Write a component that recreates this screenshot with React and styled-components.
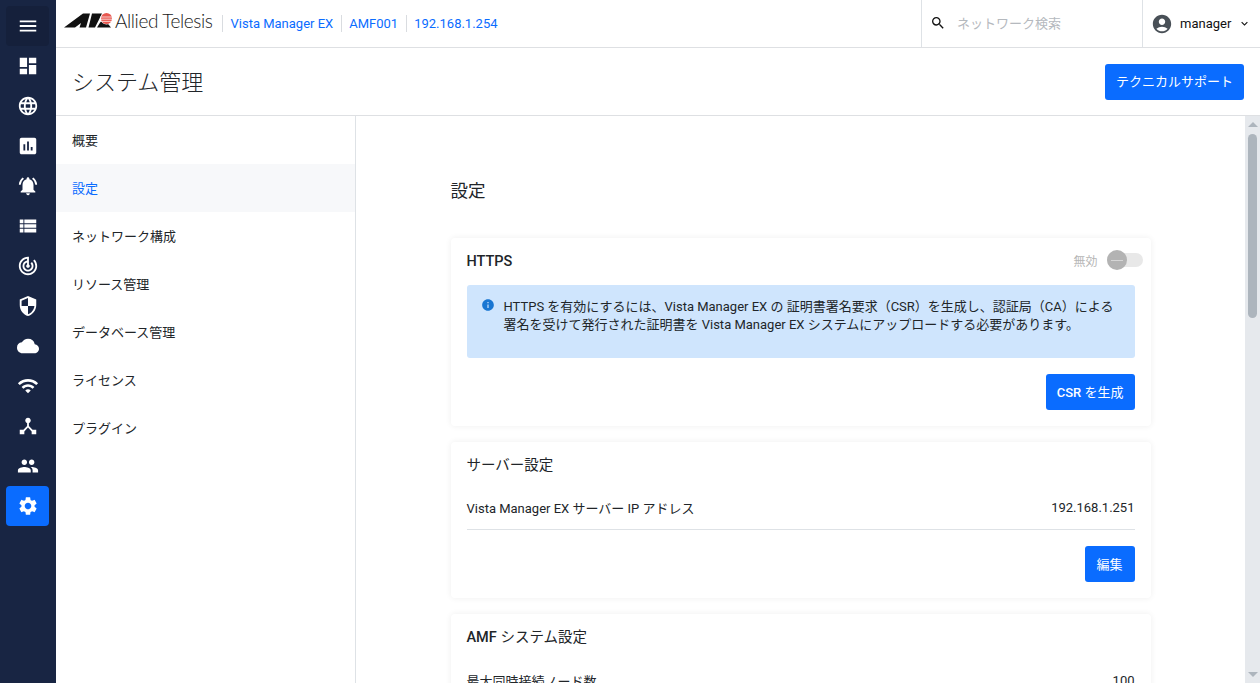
import React from "react";
import styled, { createGlobalStyle } from "styled-components";
import {
  MdMenu,
  MdDashboard,
  MdLanguage,
  MdAssessment,
  MdNotificationsActive,
  MdViewList,
  MdTrackChanges,
  MdSecurity,
  MdCloud,
  MdWifi,
  MdDeviceHub,
  MdPeople,
  MdSettings,
  MdSearch,
  MdAccountCircle,
  MdKeyboardArrowDown,
  MdInfo,
} from "react-icons/md";

const BLUE = "#0a6cff";

const GlobalStyle = createGlobalStyle`
  html, body, #root {
    margin: 0;
    height: 100%;
  }
  body {
    font-family: Roboto, "Noto Sans CJK JP", sans-serif;
    font-size: 13px;
    color: #212529;
    background: #fff;
    overflow: hidden;
  }
  * {
    box-sizing: border-box;
  }
`;

const Shell = styled.div`
  display: flex;
  height: 100vh;
`;

const Sidebar = styled.nav`
  flex: 0 0 56px;
  display: flex;
  flex-direction: column;
  padding: 6px 0 0 6px;
  background: #182543;
`;

const SideButton = styled.div`
  width: 43px;
  height: 40px;
  display: flex;
  align-items: center;
  justify-content: center;
  border-radius: 4px;
  color: #fff;
  font-size: 22px;
  background: ${({ $active, $dark }) => ($active ? BLUE : $dark ? "#15203b" : "transparent")};
`;

const Main = styled.div`
  flex: 1;
  min-width: 0;
  display: flex;
  flex-direction: column;
`;

const TopBar = styled.header`
  flex: 0 0 48px;
  display: flex;
  align-items: stretch;
  border-bottom: 1px solid #dee0e3;
`;

const Brand = styled.div`
  flex: 1;
  display: flex;
  align-items: center;
  padding-left: 8px;
`;

const LogoBlock = styled.div`
  display: flex;
  align-items: center;
  width: 158px;
  padding-bottom: 7px;
`;

const LogoText = styled.span`
  margin-left: 2px;
  font-family: Lato, sans-serif;
  font-weight: 300;
  font-size: 19px;
  letter-spacing: -0.4px;
  color: #1a1a1a;
  white-space: nowrap;
`;

const Crumb = styled.span`
  color: ${BLUE};
  font-size: 13px;
  padding: 0 7.5px;
  line-height: 17px;
  border-left: 1px solid #d9dce0;
`;

const Search = styled.div`
  flex: 0 0 221px;
  display: flex;
  align-items: center;
  gap: 11px;
  padding: 0 0 2px 8px;
  border-left: 1px solid #dee2e6;
  font-size: 13px;
  color: #b5b9be;
  svg {
    color: #111;
    font-size: 16px;
  }
`;

const UserMenu = styled.div`
  flex: 0 0 118px;
  display: flex;
  align-items: center;
  padding-left: 8px;
  border-left: 1px solid #dee2e6;
  color: #111;
`;

const Avatar = styled(MdAccountCircle)`
  font-size: 22px;
  color: #495057;
`;

const UserName = styled.span`
  margin: 0 7px 0 7px;
  font-size: 13px;
`;

const PageHead = styled.div`
  flex: 0 0 68px;
  display: flex;
  align-items: center;
  justify-content: space-between;
  padding: 0 16px;
  border-bottom: 1px solid #dee0e3;
`;

const PageTitle = styled.h1`
  margin: 0;
  padding-bottom: 3px;
  font-size: 22px;
  font-weight: 300;
  color: #212529;
`;

const Button = styled.button`
  height: 36px;
  min-width: 50px;
  padding: 0 11px 2px;
  border: 0;
  border-radius: 3px;
  background: ${BLUE};
  color: #fff;
  font: inherit;
  font-size: 13px;
`;

const Latin = styled.span`
  font-weight: 500;
`;

const Body = styled.div`
  flex: 1;
  min-height: 0;
  display: flex;
`;

const SubNav = styled.ul`
  flex: 0 0 300px;
  margin: 0;
  padding: 0;
  list-style: none;
  border-right: 1px solid #dee2e6;
`;

const SubNavItem = styled.li`
  height: 48px;
  display: flex;
  align-items: center;
  padding: 0 0 2px 16px;
  color: ${({ $active }) => ($active ? BLUE : "#212529")};
  background: ${({ $active }) => ($active ? "#f7f8fa" : "transparent")};
`;

const Content = styled.main`
  flex: 1;
  min-width: 0;
  overflow: hidden;
`;

const ContentInner = styled.div`
  width: 700px;
  margin: 0 auto;
  padding-top: 64px;
`;

const ScrollTrack = styled.div`
  flex: 0 0 15px;
  display: flex;
  flex-direction: column;
  align-items: center;
  padding-top: 6px;
  background: #e6e9ed;
`;

const ScrollArrow = styled.div`
  width: 0;
  height: 0;
  border-left: 5px solid transparent;
  border-right: 5px solid transparent;
  border-bottom: 5px solid #adb5bd;
  border-top: 0;
  ${({ $down }) =>
    $down &&
    `
    margin-top: auto;
    margin-bottom: 6px;
    border-top: 5px solid #adb5bd;
    border-bottom: 0;
  `}
`;

const ScrollThumb = styled.div`
  width: 9px;
  height: 184px;
  margin-top: 7px;
  border-radius: 5px;
  background: #adb5bd;
`;

const SectionTitle = styled.h2`
  margin: 0 0 36px;
  font-size: 17.5px;
  font-weight: 400;
  line-height: 22px;
`;

const Card = styled.section`
  margin-bottom: 16px;
  padding: 12px 16px 16px;
  border-radius: 4px;
  background: #fff;
  box-shadow: 0 0 6px rgba(0, 0, 0, 0.07);
`;

const CardHead = styled.div`
  display: flex;
  align-items: center;
  justify-content: space-between;
  height: 21px;
  margin-bottom: ${({ $gap }) => $gap || 0}px;
`;

const CardTitle = styled.h3`
  margin: 0;
  font-size: 14.5px;
  font-weight: 400;
  ${({ $cjk }) => ($cjk ? "padding-bottom: 3px;" : "padding-top: 2px;")}
`;

const ToggleWrap = styled.div`
  display: flex;
  align-items: center;
  gap: 9px;
  margin-right: -8px;
  padding-bottom: 1px;
  color: #b5b5b5;
  font-size: 12px;
`;

const ToggleTrack = styled.div`
  position: relative;
  width: 36px;
  height: 14px;
  border-radius: 7px;
  background: #e8e8e8;
`;

const ToggleThumb = styled.div`
  position: absolute;
  left: 0;
  top: -3px;
  width: 20px;
  height: 20px;
  border-radius: 50%;
  background: #b3b3b3;
  display: flex;
  align-items: center;
  justify-content: center;
  &::after {
    content: "";
    width: 12px;
    height: 1px;
    background: #d6d6d6;
  }
`;

const Alert = styled.div`
  display: flex;
  gap: 9px;
  height: 73px;
  padding: 13px 14px;
  border-radius: 3px;
  background: #cfe5fd;
  line-height: 18px;
  svg {
    flex: none;
    color: #1976d2;
    font-size: 14px;
  }
`;

const Actions = styled.div`
  display: flex;
  justify-content: flex-end;
  margin-top: 16px;
`;

const Row = styled.div`
  display: flex;
  justify-content: space-between;
  align-items: center;
  height: 55px;
  padding-top: 11px;
  border-bottom: ${({ $plain }) => ($plain ? "0" : "1px solid #dee2e6")};
`;

const NAV_ICONS = [
  MdDashboard,
  MdLanguage,
  MdAssessment,
  MdNotificationsActive,
  MdViewList,
  MdTrackChanges,
  MdSecurity,
  MdCloud,
  MdWifi,
  MdDeviceHub,
  MdPeople,
];

const SUB_NAV = ["概要", "設定", "ネットワーク構成", "リソース管理", "データベース管理", "ライセンス", "プラグイン"];

const Logo = () => (
  <svg width="49" height="15" viewBox="0 0 49 15">
    <path d="M0 14.5 L19 0.5 H26 L22 14.5 H15.5 L17 10 L11 14.5 Z" fill="#111" />
    <path d="M28 0.5 H38 L31 14.5 H24.5 Z" fill="#111" />
    <path d="M33 14.5 L39 5 L47 14.5 Z" fill="#111" />
    <circle cx="42.5" cy="5.5" r="6" fill="#fff" />
    <circle cx="42.5" cy="5.5" r="5.5" fill="#e8574f" />
    <path d="M36 4H49M36 6.2H49M36 8.4H49" stroke="#fff" strokeWidth="0.7" />
  </svg>
);

const App = () => {
  return (
    <Shell>
      <GlobalStyle />
      <Sidebar>
        <SideButton $dark>
          <MdMenu />
        </SideButton>
        {NAV_ICONS.map((Icon, i) => (
          <SideButton key={i}>
            <Icon />
          </SideButton>
        ))}
        <SideButton $active>
          <MdSettings />
        </SideButton>
      </Sidebar>
      <Main>
        <TopBar>
          <Brand>
            <LogoBlock>
              <Logo />
              <LogoText>Allied Telesis</LogoText>
            </LogoBlock>
            <Crumb>Vista Manager EX</Crumb>
            <Crumb>AMF001</Crumb>
            <Crumb>192.168.1.254</Crumb>
          </Brand>
          <Search>
            <MdSearch />
            ネットワーク検索
          </Search>
          <UserMenu>
            <Avatar />
            <UserName>manager</UserName>
            <MdKeyboardArrowDown />
          </UserMenu>
        </TopBar>
        <PageHead>
          <PageTitle>システム管理</PageTitle>
          <Button>テクニカルサポート</Button>
        </PageHead>
        <Body>
          <SubNav>
            {SUB_NAV.map((label) => (
              <SubNavItem key={label} $active={label === "設定"}>
                {label}
              </SubNavItem>
            ))}
          </SubNav>
          <Content>
            <ContentInner>
              <SectionTitle>設定</SectionTitle>
              <Card>
                <CardHead $gap={14}>
                  <CardTitle>
                    <Latin>HTTPS</Latin>
                  </CardTitle>
                  <ToggleWrap>
                    無効
                    <ToggleTrack>
                      <ToggleThumb />
                    </ToggleTrack>
                  </ToggleWrap>
                </CardHead>
                <Alert>
                  <MdInfo />
                  <div>
                    HTTPS を有効にするには、Vista Manager EX の 証明書署名要求（CSR）を生成し、認証局（CA）による
                    <br />
                    署名を受けて発行された証明書を Vista Manager EX システムにアップロードする必要があります。
                  </div>
                </Alert>
                <Actions>
                  <Button>
                    <Latin>CSR</Latin> を生成
                  </Button>
                </Actions>
              </Card>
              <Card>
                <CardHead>
                  <CardTitle $cjk>サーバー設定</CardTitle>
                </CardHead>
                <Row>
                  <span>Vista Manager EX サーバー IP アドレス</span>
                  <span>192.168.1.251</span>
                </Row>
                <Actions>
                  <Button>編集</Button>
                </Actions>
              </Card>
              <Card>
                <CardHead>
                  <CardTitle $cjk>
                    <Latin>AMF</Latin> システム設定
                  </CardTitle>
                </CardHead>
                <Row $plain>
                  <span>最大同時接続ノード数</span>
                  <span>100</span>
                </Row>
              </Card>
            </ContentInner>
          </Content>
          <ScrollTrack>
            <ScrollArrow />
            <ScrollThumb />
            <ScrollArrow $down />
          </ScrollTrack>
        </Body>
      </Main>
    </Shell>
  );
};

export default App;
